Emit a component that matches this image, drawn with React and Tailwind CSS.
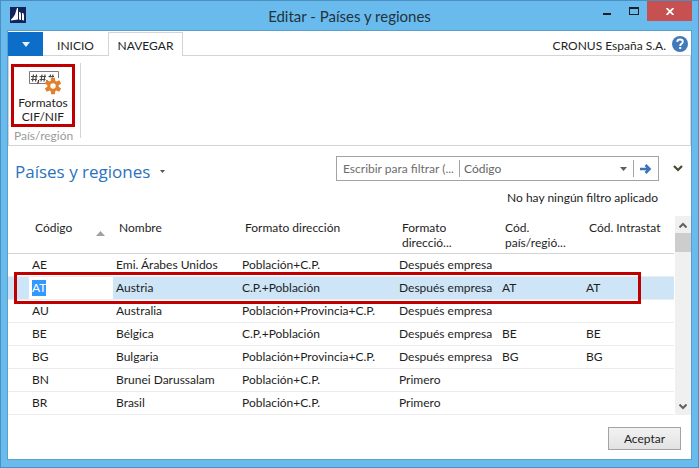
const columns = ['Código', 'Nombre', 'Formato dirección', 'Formato direcció...', 'Cód. país/regió...', 'Cód. Intrastat'];

const rows = [
  ['AE', 'Emi. Árabes Unidos', 'Población+C.P.', 'Después empresa', '', ''],
  ['AT', 'Austria', 'C.P.+Población', 'Después empresa', 'AT', 'AT'],
  ['AU', 'Australia', 'Población+Provincia+C.P.', 'Después empresa', '', ''],
  ['BE', 'Bélgica', 'C.P.+Población', 'Después empresa', 'BE', 'BE'],
  ['BG', 'Bulgaria', 'Población+Provincia+C.P.', 'Después empresa', 'BG', 'BG'],
  ['BN', 'Brunei Darussalam', 'Población+C.P.', 'Primero', '', ''],
  ['BR', 'Brasil', 'Población+C.P.', 'Primero', '', ''],
];

function TitleBar() {
  return (
    <header className="flex h-[29px] shrink-0 items-start">
      <div className="flex w-[135px] pl-[3px] pt-1.5">
        <svg width="16" height="16" viewBox="0 0 16 16" aria-hidden="true">
          <rect width="16" height="16" fill="#14245a" />
          <path d="M7 1h1v11.500L1 13.500V12.500L3 10.500L5 7.500z" fill="#fff" />
          <path d="M9 5h1.200L11 7v6L9 12.600zM12 6h1.200L14 8v5.500L12 13z" fill="#fff" />
        </svg>
      </div>
      <h1 className="flex-1 pt-[3px] text-center text-[15px] leading-6 text-[#24323c]">Editar - Países y regiones</h1>
      <div className="flex w-[135px] justify-end">
        <button aria-label="Minimizar" className="flex h-5 w-7 items-center justify-center">
          <svg width="8" height="12" viewBox="0 0 8 12"><path d="M0 8h8v2H0z" fill="#1e1e1e" /></svg>
        </button>
        <button aria-label="Maximizar" className="flex h-5 w-[26px] items-center justify-center">
          <svg width="10" height="8" viewBox="0 0 10 8"><path d="M0 0h10v8H0zM1 2v5h8V2z" fill="#1e1e1e" fillRule="evenodd" /></svg>
        </button>
        <button aria-label="Cerrar" className="flex h-5 w-[45px] items-center justify-center bg-[#c75050]">
          <svg width="8" height="7" viewBox="0 0 8 7"><path d="M.5 0l7 7M7.500 0l-7 7" stroke="#fff" strokeWidth="1.800" /></svg>
        </button>
      </div>
    </header>
  );
}

function TabBar() {
  return (
    <nav className="flex h-[25px] shrink-0 items-stretch pt-px text-xs">
      <button aria-label="Menú" className="flex w-[35px] items-center justify-center bg-[#0d6ec9]">
        <svg width="8" height="5" viewBox="0 0 8 5"><path d="M0 0h8L4 5z" fill="#e6f3ff" /></svg>
      </button>
      <button className="w-[65px] border-b border-[#d4d4d4] pt-1">INICIO</button>
      <button className="w-[75px] border-x border-t border-[#d4d4d4] pt-[3px]">NAVEGAR</button>
      <div className="flex flex-1 items-center justify-end gap-1.5 border-b border-[#d4d4d4] pr-[3px]">
        <span className="pt-1">CRONUS España S.A.</span>
        <button aria-label="Ayuda">
          <svg width="16" height="16" viewBox="0 0 16 16">
            <circle cx="8" cy="8" r="8" fill="#4279b8" />
            <path d="M5.200 5.800Q5.400 3.500 8 3.500Q10.800 3.500 10.800 5.800Q10.800 7 9.400 7.900Q8.200 8.700 8.200 10" fill="none" stroke="#fff" strokeWidth="1.900" />
            <rect x="7.200" y="11" width="2" height="2" fill="#fff" />
          </svg>
        </button>
      </div>
    </nav>
  );
}

const teeth = [0, 60, 120, 180, 240, 300];

function FormatIcon() {
  return (
    <svg className="ml-1" width="32" height="26" viewBox="0 0 32 26" aria-hidden="true">
      <path d="M16 13.500H.5V1.500h29V8" fill="none" stroke="#85757f" />
      <path d="M4.500 4.500l-1 7M7.500 4.500l-1 7M2 6.500h6.500M2 9.500h6M13 4.500l-1 7M16 4.500l-1 7M10.500 6.500h6.500M10.500 9.500h6M21.500 4.500l-.5 3M24 4.500l-.5 3M19.500 6.500h5.500" stroke="#4a4a4a" strokeWidth="1.200" fill="none" />
      <path d="M9.500 10v1.500l-1 2M18 10v1.500l-1 2" stroke="#333" strokeWidth="1.200" fill="none" />
      <circle cx="24" cy="16" r="7.500" fill="#fff" />
      <g fill="#e2802c">
        {teeth.map((angle) => (
          <path key={angle} d="M21.800 11l.3-3.300h3.800l.3 3.300z" transform={`rotate(${angle} 24 16)`} />
        ))}
      </g>
      <circle cx="24" cy="16" r="4.200" fill="#fff" stroke="#e2802c" strokeWidth="3" />
    </svg>
  );
}

function Ribbon() {
  return (
    <section className="flex h-[90px] shrink-0 border-x border-b border-[#d4d4d4]">
      <div className="my-[7px] flex w-[72px] flex-col border-r border-[#d4d4d4] pl-0.5 pt-px">
        <button className="flex h-[63px] w-16 flex-col items-center whitespace-nowrap border-[3px] border-[#c00000] pt-[3px] text-xs leading-[14px]">
          <FormatIcon />
          <span>Formatos<br />CIF/NIF</span>
        </button>
        <span className="pl-[3px] text-xs leading-[18px] text-[#9a9a9a]">País/región</span>
      </div>
    </section>
  );
}

function Filter() {
  return (
    <div className="flex items-start">
      <form className="flex h-[25px] w-[323px] items-center border border-[#a3a3a3] text-xs" onSubmit={(e) => e.preventDefault()}>
        <input aria-label="Filtro" placeholder="Escribir para filtrar (..." className="w-[122px] pl-1.5 outline-none placeholder:text-[#6e6e6e]" />
        <div className="relative flex h-[17px] flex-1 items-center border-x border-[#a3a3a3]">
          <select aria-label="Campo de filtro" className="w-full appearance-none bg-transparent pl-1 text-[#666]">
            <option>Código</option>
            <option>Nombre</option>
          </select>
          <svg className="pointer-events-none absolute right-1.5" width="7" height="4" viewBox="0 0 7 4"><path d="M0 0h7L3.500 4z" fill="#5e5e5e" /></svg>
        </div>
        <button aria-label="Aplicar filtro" className="flex w-6 justify-center">
          <svg width="12" height="10" viewBox="0 0 12 10"><path d="M0 5h10M5.500 1l4 4-4 4" fill="none" stroke="#3d74b6" strokeWidth="2.600" /></svg>
        </button>
      </form>
      <button aria-label="Expandir filtros" className="flex h-[25px] w-8 items-center justify-center pl-1.5">
        <svg width="10" height="7" viewBox="0 0 10 7"><path d="M1 1l4 4 4-4" fill="none" stroke="#454a30" strokeWidth="2.200" /></svg>
      </button>
    </div>
  );
}

function CountryTable() {
  return (
    <div className="flex">
      <div className="relative min-w-0 flex-1">
        <table className="w-full table-fixed border-separate border-spacing-0 text-left text-xs">
          <colgroup>
            <col className="w-[21px]" />
            <col className="w-[84px]" />
            <col className="w-[126px]" />
            <col className="w-[157px]" />
            <col className="w-[103px]" />
            <col className="w-[84px]" />
            <col />
          </colgroup>
          <thead>
            <tr className="h-[38px] align-top leading-[15px]">
              <th className="border-b border-[#d4d4d4]" aria-label="Fila" />
              {columns.map((name, i) => (
                <th key={name} className="border-b border-[#d4d4d4] pl-1.5 pr-2 pt-1 font-normal">
                  <div className="flex items-start justify-between">
                    {name}
                    {i === 0 && (
                      <svg className="mt-[11px]" width="9" height="5" viewBox="0 0 9 5"><path d="M0 5h9L4.500 0z" fill="#a0a0a0" /></svg>
                    )}
                  </div>
                </th>
              ))}
            </tr>
          </thead>
          <tbody>
            {rows.map((row) => {
              const selected = row[0] === 'AT';
              return (
                <tr key={row[0]} className={selected ? 'h-[23px] bg-[#cde5f7]' : 'h-[23px]'}>
                  <td className="border-b border-[#ededed]" />
                  {row.map((value, i) => (
                    <td
                      key={i}
                      className={
                        selected && i === 0
                          ? 'whitespace-nowrap border-b border-[#ededed] bg-white pl-[3px] leading-4'
                          : 'whitespace-nowrap border-b border-[#ededed] pl-[3px] leading-4'
                      }
                    >
                      {selected && i === 0 ? <span className="inline-block bg-[#3399ff] text-white">{value}</span> : value}
                    </td>
                  ))}
                </tr>
              );
            })}
          </tbody>
        </table>
        <div className="pointer-events-none absolute left-1.5 right-[33px] top-[56px] h-8 border-[3px] border-[#c00000]" />
      </div>
      <div className="ml-px flex w-4 flex-col items-center bg-[#f0f0f0]">
        <button aria-label="Subir" className="flex h-[17px] items-center">
          <svg width="8" height="6" viewBox="0 0 8 6"><path d="M.5 5.500L4 2l3.500 3.500" fill="none" stroke="#606060" strokeWidth="2" /></svg>
        </button>
        <div className="h-[19px] w-full bg-[#cdcdcd]" />
        <button aria-label="Bajar" className="mt-auto flex h-[17px] items-center">
          <svg width="8" height="6" viewBox="0 0 8 6"><path d="M.5 .5L4 4 7.500 .5" fill="none" stroke="#606060" strokeWidth="2" /></svg>
        </button>
      </div>
    </div>
  );
}

export default function App() {
  return (
    <div className="flex min-h-screen flex-col border border-[#4a8fc0] bg-[#69bbee] px-1.5 pb-[7px] font-[Lato,'Open_Sans',sans-serif] text-[#1e1e1e]">
      <TitleBar />
      <main className="flex flex-1 flex-col border border-[#5a9fc9] bg-white">
        <TabBar />
        <Ribbon />
        <div className="flex justify-between pt-2.5">
          <h2 className="flex items-start gap-2.5 pl-[7px] pt-1 font-['Open_Sans','Noto_Sans',sans-serif] text-[17px] leading-6 text-[#2a73bd]">
            Países y regiones
            <button aria-label="Opciones de página" className="flex pt-2.5">
              <svg width="5" height="3" viewBox="0 0 5 3"><path d="M0 0h5L2.500 3z" fill="#555" /></svg>
            </button>
          </h2>
          <Filter />
        </div>
        <p className="pb-2.5 pr-[33px] pt-1.5 text-right text-xs leading-4">No hay ningún filtro aplicado</p>
        <CountryTable />
        <footer className="flex justify-end pr-2.5 pt-3">
          <button className="h-[23px] w-[73px] border border-[#a3a3a3] bg-linear-to-b from-[#f2f2f2] to-[#e2e2e2] text-xs">Aceptar</button>
        </footer>
      </main>
    </div>
  );
}
